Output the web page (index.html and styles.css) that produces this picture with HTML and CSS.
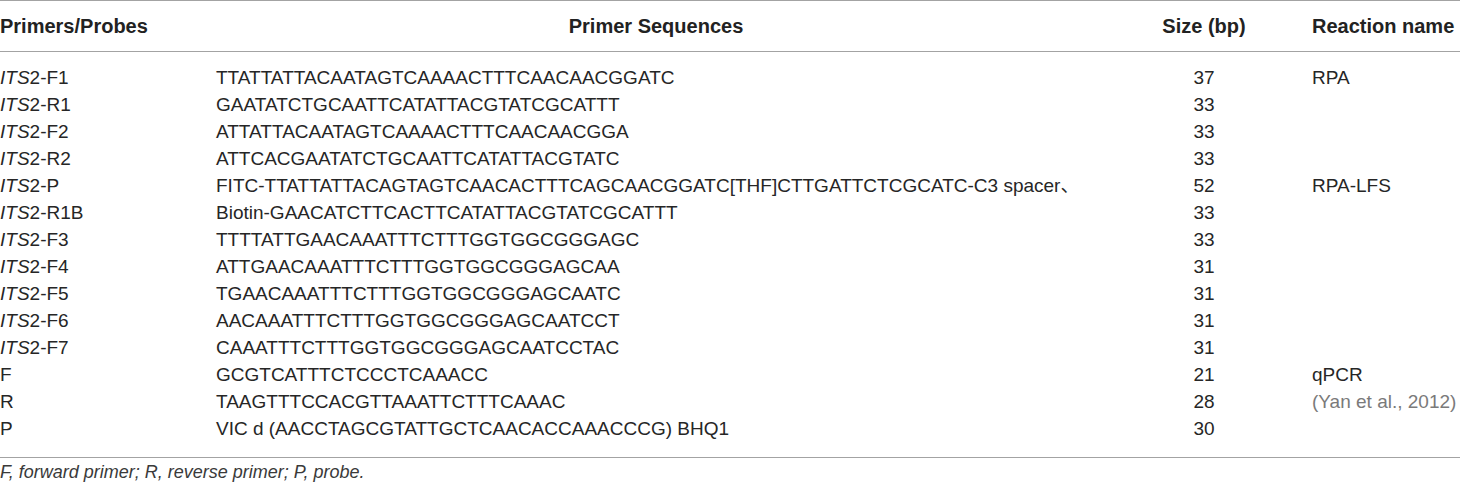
FILE: index.html
```html
<!DOCTYPE html>
<html>
<head>
<meta charset="utf-8">
<link rel="stylesheet" href="styles.css">
</head>
<body>
<table class="primers">
  <colgroup>
    <col class="c-name">
    <col class="c-seq">
    <col class="c-size">
    <col class="c-react">
  </colgroup>
  <thead>
    <tr>
      <th class="left">Primers/Probes</th>
      <th class="center">Primer Sequences</th>
      <th class="center">Size (bp)</th>
      <th class="left">Reaction name</th>
    </tr>
  </thead>
  <tbody>
    <tr class="first"><td><i>ITS</i>2-F1</td><td>TTATTATTACAATAGTCAAAACTTTCAACAACGGATC</td><td class="num">37</td><td>RPA</td></tr>
    <tr><td><i>ITS</i>2-R1</td><td>GAATATCTGCAATTCATATTACGTATCGCATTT</td><td class="num">33</td><td></td></tr>
    <tr><td><i>ITS</i>2-F2</td><td>ATTATTACAATAGTCAAAACTTTCAACAACGGA</td><td class="num">33</td><td></td></tr>
    <tr><td><i>ITS</i>2-R2</td><td>ATTCACGAATATCTGCAATTCATATTACGTATC</td><td class="num">33</td><td></td></tr>
    <tr><td><i>ITS</i>2-P</td><td>FITC-TTATTATTACAGTAGTCAACACTTTCAGCAACGGATC[THF]CTTGATTCTCGCATC-C3 spacer、</td><td class="num">52</td><td>RPA-LFS</td></tr>
    <tr><td><i>ITS</i>2-R1B</td><td>Biotin-GAACATCTTCACTTCATATTACGTATCGCATTT</td><td class="num">33</td><td></td></tr>
    <tr><td><i>ITS</i>2-F3</td><td>TTTTATTGAACAAATTTCTTTGGTGGCGGGAGC</td><td class="num">33</td><td></td></tr>
    <tr><td><i>ITS</i>2-F4</td><td>ATTGAACAAATTTCTTTGGTGGCGGGAGCAA</td><td class="num">31</td><td></td></tr>
    <tr><td><i>ITS</i>2-F5</td><td>TGAACAAATTTCTTTGGTGGCGGGAGCAATC</td><td class="num">31</td><td></td></tr>
    <tr><td><i>ITS</i>2-F6</td><td>AACAAATTTCTTTGGTGGCGGGAGCAATCCT</td><td class="num">31</td><td></td></tr>
    <tr><td><i>ITS</i>2-F7</td><td>CAAATTTCTTTGGTGGCGGGAGCAATCCTAC</td><td class="num">31</td><td></td></tr>
    <tr><td>F</td><td>GCGTCATTTCTCCCTCAAACC</td><td class="num">21</td><td>qPCR</td></tr>
    <tr><td>R</td><td>TAAGTTTCCACGTTAAATTCTTTCAAAC</td><td class="num">28</td><td class="ref">(Yan et al., 2012)</td></tr>
    <tr class="last"><td>P</td><td>VIC d (AACCTAGCGTATTGCTCAACACCAAACCCG) BHQ1</td><td class="num">30</td><td></td></tr>
  </tbody>
</table>
<p class="foot">F, forward primer; R, reverse primer; P, probe.</p>
</body>
</html>
```
FILE: styles.css
```css
html, body {
  margin: 0;
  padding: 0;
  background: #ffffff;
}
body {
  font-family: "Liberation Sans", Arial, "Noto Sans CJK SC", sans-serif;
  color: #262626;
  width: 1460px;
}
.primers {
  border-collapse: collapse;
  width: 1460px;
  table-layout: fixed;
  border-top: 1px solid #a3a3a3;
  border-bottom: 1px solid #a3a3a3;
}
.c-name { width: 216px; }
.c-seq { width: 880px; }
.c-size { width: 216px; }
.c-react { width: 148px; }
.primers th {
  font-size: 20px;
  font-weight: bold;
  line-height: 50px;
  height: 50px;
  padding: 0;
  color: #222222;
  border-bottom: 1px solid #a3a3a3;
  white-space: nowrap;
}
.primers th.left { text-align: left; }
.primers th.center { text-align: center; }
.primers td {
  font-size: 19px;
  line-height: 27px;
  height: 27px;
  padding: 0;
  white-space: nowrap;
  vertical-align: middle;
}
.primers tr.first td { padding-top: 12px; }
.primers tr.last td { padding-bottom: 15px; }
.primers td.num { text-align: center; }
.primers td.ref { color: #7a7a7a; }
.foot {
  margin: 0;
  font-size: 18px;
  font-style: italic;
  line-height: 28px;
  color: #3a3a3a;
}
```
